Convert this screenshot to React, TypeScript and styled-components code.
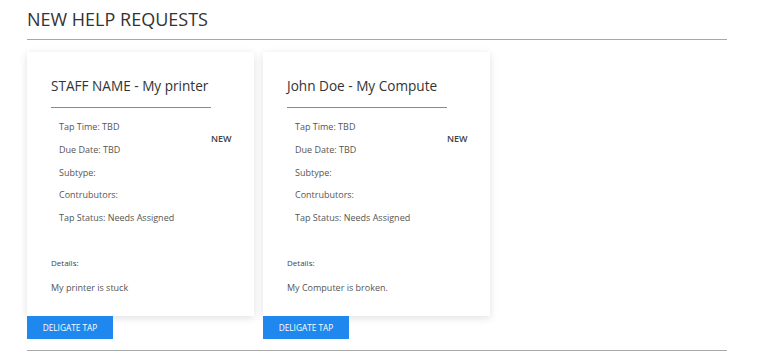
import React from "react";
import styled, { createGlobalStyle } from "styled-components";

const GlobalStyle = createGlobalStyle`
  body {
    margin: 0;
    background: #ffffff;
    font-family: "Open Sans", "Noto Sans", sans-serif;
  }
`;

const Page = styled.div`
  width: 700px;
  padding: 6px 0 0 27px;
`;

const Heading = styled.h1`
  margin: 0;
  font-size: 18px;
  font-weight: 400;
  line-height: 26px;
  color: #333333;
  padding-bottom: 7px;
`;

const Rule = styled.div`
  height: 0;
  border-top: 1.5px solid #a8a8a8;
`;

const CardRow = styled.div`
  display: flex;
  gap: 9px;
  margin-top: 12px;
`;

const Column = styled.div`
  display: flex;
  flex-direction: column;
  align-items: flex-start;
`;

const Card = styled.div`
  width: 227px;
  height: 264px;
  box-sizing: border-box;
  padding: 24px 0 0 24px;
  background: #ffffff;
  box-shadow: 0 2px 8px rgba(0, 0, 0, 0.12);
`;

const CardTitle = styled.div`
  width: 160px;
  white-space: nowrap;
  font-size: 13.6px;
  line-height: 20px;
  color: #333333;
  padding-bottom: 11px;
  border-bottom: 1.5px solid #8a8a8a;
`;

const InfoRow = styled.div`
  display: flex;
  margin-top: 8px;
`;

const InfoList = styled.div`
  width: 152px;
  padding-left: 8px;
  display: flex;
  flex-direction: column;
`;

const InfoItem = styled.div`
  font-size: 9px;
  line-height: 22.8px;
  color: #555555;
`;

const Badge = styled.div`
  padding-top: 16px;
  font-size: 9px;
  font-weight: 600;
  color: #444444;
`;

const DetailsLabel = styled.div`
  margin-top: 26px;
  font-size: 8px;
  line-height: 14px;
  color: #444444;
`;

const DetailsText = styled.div`
  margin-top: 11px;
  font-size: 9px;
  line-height: 14px;
  color: #555555;
`;

const DelegateButton = styled.button`
  width: 86px;
  height: 23px;
  border: none;
  background: #1e88ee;
  color: #ffffff;
  font-family: inherit;
  font-size: 8.3px;
  padding: 0;
  cursor: pointer;
`;

const BottomRule = styled(Rule)`
  margin-top: 11px;
`;

interface IRequest {
  title: string;
  details: string;
}

const requests: IRequest[] = [
  { title: "STAFF NAME - My printer", details: "My printer is stuck" },
  { title: "John Doe - My Compute", details: "My Computer is broken." },
];

function RequestCard({ item }: { item: IRequest }) {
  return (
    <Column>
      <Card>
        <CardTitle>{item.title}</CardTitle>
        <InfoRow>
          <InfoList>
            <InfoItem>Tap Time: TBD</InfoItem>
            <InfoItem>Due Date: TBD</InfoItem>
            <InfoItem>Subtype:</InfoItem>
            <InfoItem>Contrubutors:</InfoItem>
            <InfoItem>Tap Status: Needs Assigned</InfoItem>
          </InfoList>
          <Badge>NEW</Badge>
        </InfoRow>
        <DetailsLabel>Details:</DetailsLabel>
        <DetailsText>{item.details}</DetailsText>
      </Card>
      <DelegateButton>DELIGATE TAP</DelegateButton>
    </Column>
  );
}

export default function App() {
  return (
    <>
      <GlobalStyle />
      <Page>
        <Heading>NEW HELP REQUESTS</Heading>
        <Rule />
        <CardRow>
          {requests.map((r) => (
            <RequestCard key={r.title} item={r} />
          ))}
        </CardRow>
        <BottomRule />
      </Page>
    </>
  );
}
